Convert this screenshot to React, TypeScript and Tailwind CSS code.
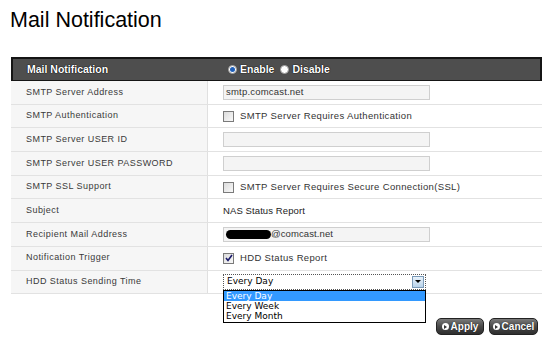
import React from "react";

const Input = ({ children }: { children?: React.ReactNode }) => (
  <div className="w-[207px] h-[15px] bg-[#f4f4f4] border border-[#cfcfcf] flex items-center pl-[2px] text-[9.5px] tracking-[0.2px] text-[#333]">
    {children}
  </div>
);

const Check = ({ checked }: { checked?: boolean }) => (
  <span className="w-[11px] h-[11px] border border-[#7a7a7a] bg-gradient-to-br from-[#dcdcdc] to-[#f8f8f8] inline-flex items-center justify-center mr-[6px] shrink-0">
    {checked && (
      <svg width="8" height="8" viewBox="0 0 8 8">
        <path d="M1 4 L3 6.5 L7 1" stroke="#1a1a6a" strokeWidth="1.6" fill="none" />
      </svg>
    )}
  </span>
);

const Radio = ({ on }: { on?: boolean }) => (
  <span className="w-[9px] h-[9px] rounded-full bg-white border border-[#999] inline-flex items-center justify-center mr-[3px]">
    {on && <span className="w-[5px] h-[5px] rounded-full bg-[#1f5fb8]" />}
  </span>
);

const Btn = ({ label, w }: { label: string; w: string }) => (
  <div
    className={`${w} h-[17px] rounded-[5px] border border-[#222] bg-gradient-to-b from-[#7a7a7a] via-[#4a4a4a] to-[#2e2e2e] flex items-center justify-center gap-[2px] text-white font-bold text-[10px] [text-shadow:0_0_1px_#000]`}
  >
    <span className="w-[7px] h-[7px] rounded-full bg-white inline-flex items-center justify-center">
      <span className="w-0 h-0 border-y-[2px] border-y-transparent border-l-[3px] border-l-[#333] ml-[1px]" />
    </span>
    {label}
  </div>
);

export default function App() {
  const rows: { label: string; value: React.ReactNode }[] = [
    { label: "SMTP Server Address", value: <Input>smtp.comcast.net</Input> },
    {
      label: "SMTP Authentication",
      value: (
        <span className="flex items-center text-[9.5px] tracking-[0.35px] text-[#333]">
          <Check />
          SMTP Server Requires Authentication
        </span>
      ),
    },
    { label: "SMTP Server USER ID", value: <Input /> },
    { label: "SMTP Server USER PASSWORD", value: <Input /> },
    {
      label: "SMTP SSL Support",
      value: (
        <span className="flex items-center text-[9.5px] tracking-[0.35px] text-[#333]">
          <Check />
          SMTP Server Requires Secure Connection(SSL)
        </span>
      ),
    },
    {
      label: "Subject",
      value: <span className="text-[9.5px] tracking-[0.1px] text-[#222]">NAS Status Report</span>,
    },
    {
      label: "Recipient Mail Address",
      value: (
        <Input>
          <span className="inline-block w-[45px] h-[9px] rounded-full bg-black" />
          <span className="tracking-[0.1px]">@comcast.net</span>
        </Input>
      ),
    },
    {
      label: "Notification Trigger",
      value: (
        <span className="flex items-center text-[9.5px] tracking-[0.35px] text-[#333]">
          <Check checked />
          HDD Status Report
        </span>
      ),
    },
    {
      label: "HDD Status Sending Time",
      value: (
        <div className="relative w-[203px] h-[16px] border border-dotted border-[#555] bg-white font-['DejaVu_Sans',sans-serif] text-[9px] text-black flex items-center pl-[3px]">
          Every Day
          <span className="absolute right-[1px] top-[1px] w-[12px] h-[12px] bg-gradient-to-b from-[#e8f2fb] to-[#b9d3ea] border border-[#7a9ab8] flex items-center justify-center">
            <span className="w-0 h-0 border-x-[3px] border-x-transparent border-t-[3px] border-t-black" />
          </span>
          <div className="absolute left-[-1px] top-[15px] w-[203px] h-[33px] border border-black bg-white z-10 flex flex-col leading-[10.3px]">
            <span className="bg-[#3399ff] text-white pl-[2px]">Every Day</span>
            <span className="pl-[2px]">Every Week</span>
            <span className="pl-[2px]">Every Month</span>
          </div>
        </div>
      ),
    },
  ];

  return (
    <div className="w-[550px] h-[339px] bg-white font-['Liberation_Sans',Arial,sans-serif] overflow-hidden">
      <div className="h-[57px] pl-[10px] pt-[8px] text-[21.5px] leading-[25px] text-black">
        Mail Notification
      </div>
      <div className="ml-[11px] w-[531px]">
        <div className="h-[24px] bg-[#4e4e4e] border-2 border-b border-[#151515] flex items-center text-white font-bold text-[10.5px] [text-shadow:0_0_1px_#000,0_0_1px_#000]">
          <div className="w-[195px] pl-[14px]">Mail Notification</div>
          <div className="flex items-center pl-[20px]">
            <Radio on />
            <span className="mr-[6px]">Enable</span>
            <Radio />
            <span>Disable</span>
          </div>
        </div>
        {rows.map((r) => (
          <div key={r.label} className="flex h-[23.7px] border-b border-[#e2e2e2]">
            <div className="w-[197px] bg-[#f6f6f6] border-r border-[#e0e0e0] flex items-center pl-[15px] text-[9px] tracking-[0.45px] text-[#3a3a3a]">
              {r.label}
            </div>
            <div className="flex-1 flex items-center pl-[15px]">{r.value}</div>
          </div>
        ))}
        <div className="flex justify-end gap-[5px] pr-[4px] mt-[24px]">
          <Btn label="Apply" w="w-[48px]" />
          <Btn label="Cancel" w="w-[49px]" />
        </div>
      </div>
    </div>
  );
}
